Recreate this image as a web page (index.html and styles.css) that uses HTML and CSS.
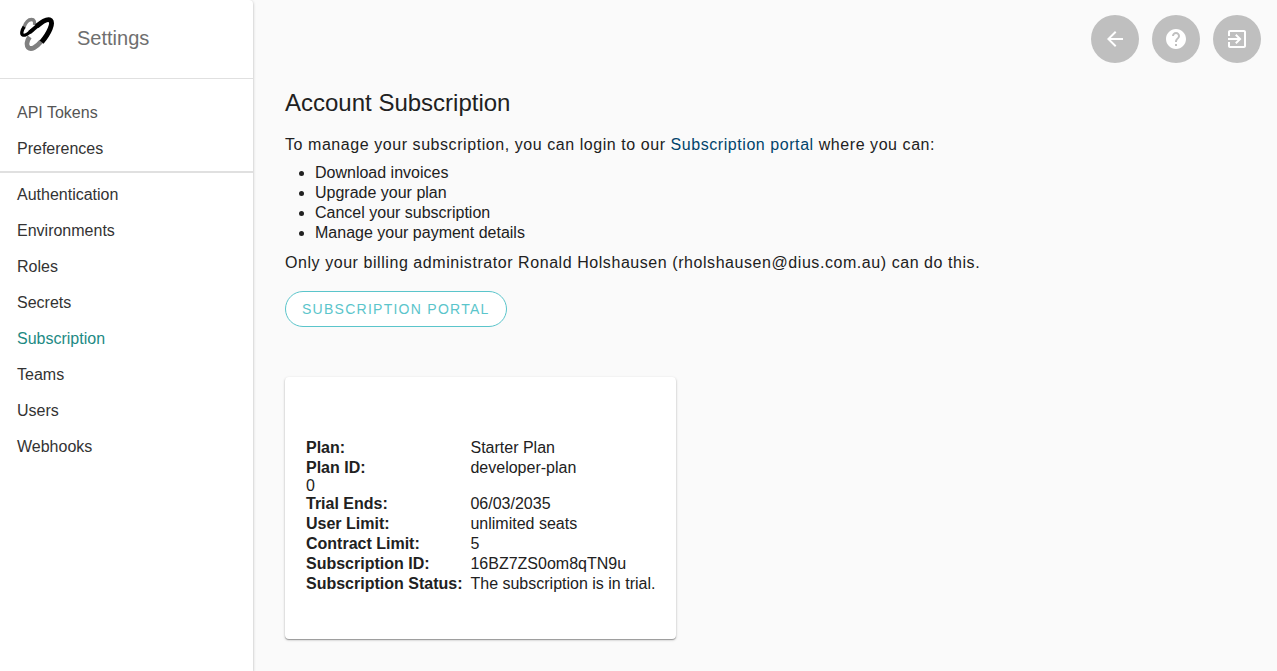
FILE: index.html
```html
<!DOCTYPE html>
<html lang="en">
<head>
<meta charset="utf-8">
<title>Settings – Account Subscription</title>
<link rel="stylesheet" href="styles.css">
</head>
<body>
<div class="app">
  <aside class="sidebar">
    <header class="brand">
      <svg class="logo" viewBox="0 0 36 36" fill="none" stroke-linecap="butt" aria-hidden="true">
        <path d="M4.600 12C6.500 6.500 9.500 3.500 12.500 3.500C15.200 3.500 16 5.500 15.500 9" stroke="#808080" stroke-width="3.300"/>
        <path d="M10.600 20.800C8 24.500 7.200 29 9.200 31.400C12.300 34.300 17.500 31 22.300 25.200" stroke="#808080" stroke-width="4.800"/>
        <path d="M5.200 10.800C2.600 14.500 2 18 3.900 19.100C6.200 20.200 9.800 17 13.500 13.900" stroke="#000" stroke-width="3.300"/>
        <path d="M10.500 16.400L20.500 8" stroke="#000" stroke-width="3.900"/>
        <path d="M17.800 10.200C24 4.800 28.800 2.200 31.500 4.400C34.500 7.200 30.500 16.500 22.600 26.200" stroke="#000" stroke-width="5"/>
      </svg>
      <span class="brand-title">Settings</span>
    </header>
    <nav class="nav" aria-label="Settings">
      <ul class="nav-group">
        <li><a class="nav-link nav-link-muted" href="#tokens">API Tokens</a></li>
        <li><a class="nav-link" href="#preferences">Preferences</a></li>
      </ul>
      <ul class="nav-group nav-group-admin">
        <li><a class="nav-link" href="#authentication">Authentication</a></li>
        <li><a class="nav-link" href="#environments">Environments</a></li>
        <li><a class="nav-link" href="#roles">Roles</a></li>
        <li><a class="nav-link" href="#secrets">Secrets</a></li>
        <li><a class="nav-link nav-link-active" href="#subscription" aria-current="page">Subscription</a></li>
        <li><a class="nav-link" href="#teams">Teams</a></li>
        <li><a class="nav-link" href="#users">Users</a></li>
        <li><a class="nav-link" href="#webhooks">Webhooks</a></li>
      </ul>
    </nav>
  </aside>
  <div class="page">
    <div class="toolbar">
      <button class="round-button" type="button" aria-label="Back">
        <svg class="icon" viewBox="0 0 24 24"><path d="M20 11H7.830l5.590-5.590L12 4l-8 8 8 8 1.410-1.410L7.830 13H20v-2z"/></svg>
      </button>
      <button class="round-button" type="button" aria-label="Help">
        <svg class="icon" viewBox="0 0 24 24"><path d="M12 2C6.480 2 2 6.480 2 12s4.480 10 10 10 10-4.480 10-10S17.520 2 12 2zm1 17h-2v-2h2v2zm2.070-7.750l-.9.920C13.450 12.900 13 13.500 13 15h-2v-.5c0-1.100.45-2.100 1.170-2.830l1.240-1.260c.37-.36.59-.86.59-1.410 0-1.100-.9-2-2-2s-2 .9-2 2H8c0-2.210 1.790-4 4-4s4 1.790 4 4c0 .88-.36 1.680-.93 2.250z"/></svg>
      </button>
      <button class="round-button" type="button" aria-label="Log out">
        <svg class="icon" viewBox="0 0 24 24"><path d="M10.090 15.590L11.500 17l5-5-5-5-1.410 1.410L12.670 11H3v2h9.670l-2.580 2.590zM19 3H5c-1.110 0-2 .9-2 2v4h2V5h14v14H5v-4H3v4c0 1.100.89 2 2 2h14c1.100 0 2-.9 2-2V5c0-1.100-.9-2-2-2z"/></svg>
      </button>
    </div>
    <main class="content">
      <h1 class="title">Account Subscription</h1>
      <p class="text">To manage your subscription, you can login to our <a class="link" href="#portal">Subscription portal</a> where you can:</p>
      <ul class="features">
        <li>Download invoices</li>
        <li>Upgrade your plan</li>
        <li>Cancel your subscription</li>
        <li>Manage your payment details</li>
      </ul>
      <p class="text">Only your billing administrator Ronald Holshausen (rholshausen@dius.com.au) can do this.</p>
      <button class="portal-button" type="button">Subscription portal</button>
      <section class="card">
        <table class="details">
          <tbody>
            <tr><th scope="row">Plan:</th><td>Starter Plan</td></tr>
            <tr><th scope="row">Plan ID:</th><td>developer-plan</td></tr>
            <tr><td class="count" colspan="2">0</td></tr>
            <tr><th scope="row">Trial Ends:</th><td>06/03/2035</td></tr>
            <tr><th scope="row">User Limit:</th><td>unlimited seats</td></tr>
            <tr><th scope="row">Contract Limit:</th><td>5</td></tr>
            <tr><th scope="row">Subscription ID:</th><td>16BZ7ZS0om8qTN9u</td></tr>
            <tr><th scope="row">Subscription Status:</th><td>The subscription is in trial.</td></tr>
          </tbody>
        </table>
      </section>
    </main>
  </div>
</div>
</body>
</html>
```
FILE: styles.css
```css
* {
  box-sizing: border-box;
}

body {
  margin: 0;
  background: #fafafa;
  color: #212121;
  font-family: "Liberation Sans", Helvetica, Arial, sans-serif;
  font-size: 16px;
  line-height: 20px;
}

ul {
  margin: 0;
  padding: 0;
  list-style: none;
}

.app {
  display: flex;
  min-height: 100vh;
}

.sidebar {
  flex: 0 0 253px;
  background: #fff;
  border-top-right-radius: 4px;
  box-shadow: 0 1px 3px rgba(0, 0, 0, 0.3);
}

.brand {
  display: flex;
  align-items: center;
  gap: 22px;
  padding: 16px 19px 26px;
  border-bottom: 1px solid #e0e0e0;
}

.logo {
  width: 36px;
  height: 36px;
}

.brand-title {
  padding-top: 8px;
  color: #6f6f6f;
  font-size: 20px;
}

.nav-group {
  padding: 16px 0 4px;
}

.nav-group-admin {
  padding-top: 4px;
  border-top: 2px solid #e0e0e0;
}

.nav-link {
  display: block;
  padding: 8px 17px;
  color: #333;
  text-decoration: none;
}

.nav-link-muted {
  color: #555;
}

.nav-link-active {
  color: #1d8a84;
}

.page {
  flex: 1;
  min-width: 0;
}

.toolbar {
  display: flex;
  justify-content: flex-end;
  gap: 13px;
  padding: 15px 16px 0;
}

.round-button {
  display: grid;
  place-items: center;
  width: 48px;
  height: 48px;
  padding: 0;
  border: 0;
  border-radius: 50%;
  background: #bfbfbf;
}

.icon {
  width: 24px;
  height: 24px;
  fill: #fff;
}

.content {
  padding: 24px 32px 31px;
}

.title {
  margin: 0 0 16px;
  font-size: 24px;
  font-weight: 400;
  line-height: 32px;
}

.text {
  margin: 0;
  letter-spacing: 0.035em;
}

.link {
  color: #00446b;
  text-decoration: none;
}

.features {
  margin: 8px 0 10px;
  padding-left: 30px;
  list-style: disc;
}

.portal-button {
  display: block;
  height: 36px;
  margin: 18px 0 50px;
  padding: 0 16px;
  border: 1px solid #5bc5cb;
  border-radius: 18px;
  background: #fff;
  color: #5bc5cb;
  font-family: inherit;
  font-size: 14px;
  letter-spacing: 0.09em;
  text-transform: uppercase;
}

.card {
  width: fit-content;
  padding: 61px 21px 45px;
  border-radius: 4px;
  background: #fff;
  box-shadow: 0 1px 3px rgba(0, 0, 0, 0.2), 0 1px 1px rgba(0, 0, 0, 0.3);
}

.details {
  border-collapse: collapse;
}

.details th,
.details td {
  padding: 0;
  text-align: left;
}

.details th {
  padding-right: 8px;
}

.details .count {
  line-height: 16px;
}
```
